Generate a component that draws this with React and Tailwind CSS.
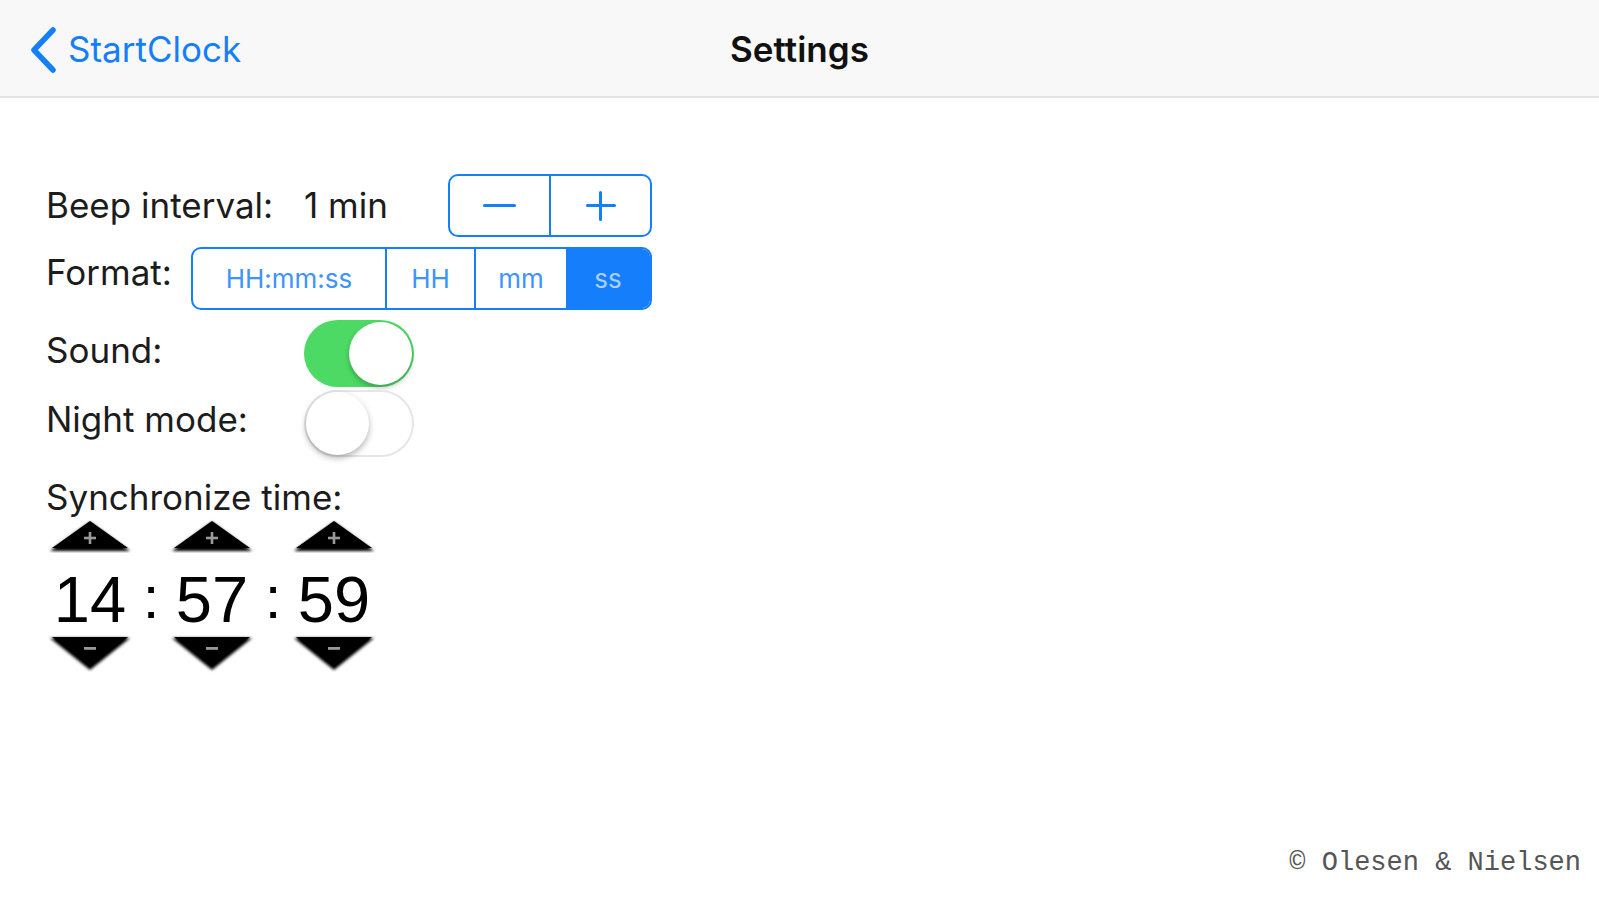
import React from "react";

const sans = { fontFamily: "Inter, 'Liberation Sans', sans-serif" };

function UpTri() {
  return (
    <svg width="84" height="34" viewBox="0 0 84 34" className="block">
      <defs>
        <filter id="blurU" x="-20%" y="-40%" width="140%" height="180%">
          <feGaussianBlur stdDeviation="1.8" />
        </filter>
      </defs>
      <polygon points="42,3 82,32 2,32" fill="#000" filter="url(#blurU)" />
      <polygon points="42,2 80,29 4,29" fill="#000" />
      <rect x="36" y="17.7" width="12" height="2.6" fill="#9a9a9a" />
      <rect x="40.7" y="13" width="2.6" height="12" fill="#9a9a9a" />
    </svg>
  );
}

function DownTri() {
  return (
    <svg width="84" height="38" viewBox="0 0 84 38" className="block">
      <defs>
        <filter id="blurD" x="-20%" y="-40%" width="140%" height="180%">
          <feGaussianBlur stdDeviation="1.8" />
        </filter>
      </defs>
      <polygon points="2,3 82,3 42,35" fill="#000" filter="url(#blurD)" />
      <polygon points="4,2 80,2 42,32" fill="#000" />
      <rect x="36" y="12" width="12" height="2.8" fill="#9a9a9a" />
    </svg>
  );
}

function TimeCol({ value }) {
  return (
    <div className="flex w-[84px] flex-col items-center">
      <UpTri />
      <div
        className="mt-[14px] text-[65px] leading-none text-black"
        style={{ fontFamily: "'Liberation Sans', Arial, sans-serif" }}
      >
        {value}
      </div>
      <div className="mt-[3px]">
        <DownTri />
      </div>
    </div>
  );
}

function Colon() {
  return (
    <div
      className="w-[38px] pt-[4px] text-center text-[60px] leading-none text-black"
      style={{ fontFamily: "'Liberation Sans', Arial, sans-serif" }}
    >
      :
    </div>
  );
}

export default function App() {
  return (
    <div className="flex h-screen w-full flex-col bg-white text-[#1c1c1c]" style={sans}>
      {/* Header */}
      <div className="grid h-[98px] shrink-0 grid-cols-[1fr_auto_1fr] items-center border-b-2 border-[#e2e2e2] bg-[#f8f8f8] pt-[3px]">
        <div className="flex items-center pl-[28px]">
          <svg width="30" height="46" viewBox="0 0 30 46" className="block">
            <polyline
              points="25,3 6,23 25,43"
              fill="none"
              stroke="#147efb"
              strokeWidth="5.5"
              strokeLinecap="round"
              strokeLinejoin="round"
            />
          </svg>
          <span className="ml-[10px] text-[35px] text-[#147efb]">StartClock</span>
        </div>
        <div className="text-[35px] font-semibold text-[#111]">Settings</div>
        <div />
      </div>

      {/* Body */}
      <div className="flex flex-col pl-[46px] pt-[76px]">
        {/* Beep interval */}
        <div className="flex items-center">
          <span className="w-[258px] text-[35px]">Beep interval:</span>
          <span className="w-[144px] text-[35px]">1 min</span>
          <div className="flex h-[63px] w-[204px] overflow-hidden rounded-[10px] border-2 border-[#147efb]">
            <div className="flex flex-1 items-center justify-center border-r-2 border-[#147efb]">
              <div className="h-[3px] w-[33px] rounded-full bg-[#147efb]" />
            </div>
            <div className="relative flex flex-1 items-center justify-center">
              <div className="h-[3px] w-[30px] rounded-full bg-[#147efb]" />
              <div className="absolute h-[30px] w-[3px] rounded-full bg-[#147efb]" />
            </div>
          </div>
        </div>

        {/* Format */}
        <div className="mt-[10px] flex items-start">
          <span className="w-[145px] text-[35px] leading-[50px]">Format:</span>
          <div className="flex h-[63px] w-[461px] overflow-hidden rounded-[10px] border-2 border-[#147efb] text-[26px] text-[#3d94fb]">
            <div className="flex w-[194px] items-center justify-center border-r-2 border-[#147efb]">HH:mm:ss</div>
            <div className="flex w-[89px] items-center justify-center border-r-2 border-[#147efb]">HH</div>
            <div className="flex w-[90px] items-center justify-center">mm</div>
            <div className="flex flex-1 items-center justify-center bg-[#147efb] text-[#a9d0fd]">ss</div>
          </div>
        </div>

        {/* Sound */}
        <div className="mt-[10px] flex items-center">
          <span className="w-[258px] pb-[6px] text-[35px]">Sound:</span>
          <div className="relative h-[67px] w-[110px] rounded-full bg-[#4cd964]">
            <div className="absolute right-[2px] top-[2px] h-[63px] w-[63px] rounded-full bg-white shadow-[0_3px_5px_rgba(0,0,0,0.25)]" />
          </div>
        </div>

        {/* Night mode */}
        <div className="mt-[3px] flex items-center">
          <span className="w-[258px] pb-[8px] text-[35px]">Night mode:</span>
          <div className="relative h-[67px] w-[110px] rounded-full border-2 border-[#e6e6e6] bg-white">
            <div className="absolute left-0 top-0 h-[63px] w-[63px] rounded-full bg-white shadow-[0_3px_6px_rgba(0,0,0,0.3)]" />
          </div>
        </div>

        {/* Synchronize time */}
        <div className="mt-[19px] text-[35px] leading-[42px]">Synchronize time:</div>
        <div className="ml-[2px] mt-[1px] flex items-center">
          <TimeCol value="14" />
          <Colon />
          <TimeCol value="57" />
          <Colon />
          <TimeCol value="59" />
        </div>
      </div>

      {/* Footer */}
      <div className="mt-auto flex justify-end pb-[17px] pr-[18px]">
        <span
          className="text-[27px] text-[#555]"
          style={{ fontFamily: "'Liberation Mono', 'DejaVu Sans Mono', monospace" }}
        >
          © Olesen &amp; Nielsen
        </span>
      </div>
    </div>
  );
}
